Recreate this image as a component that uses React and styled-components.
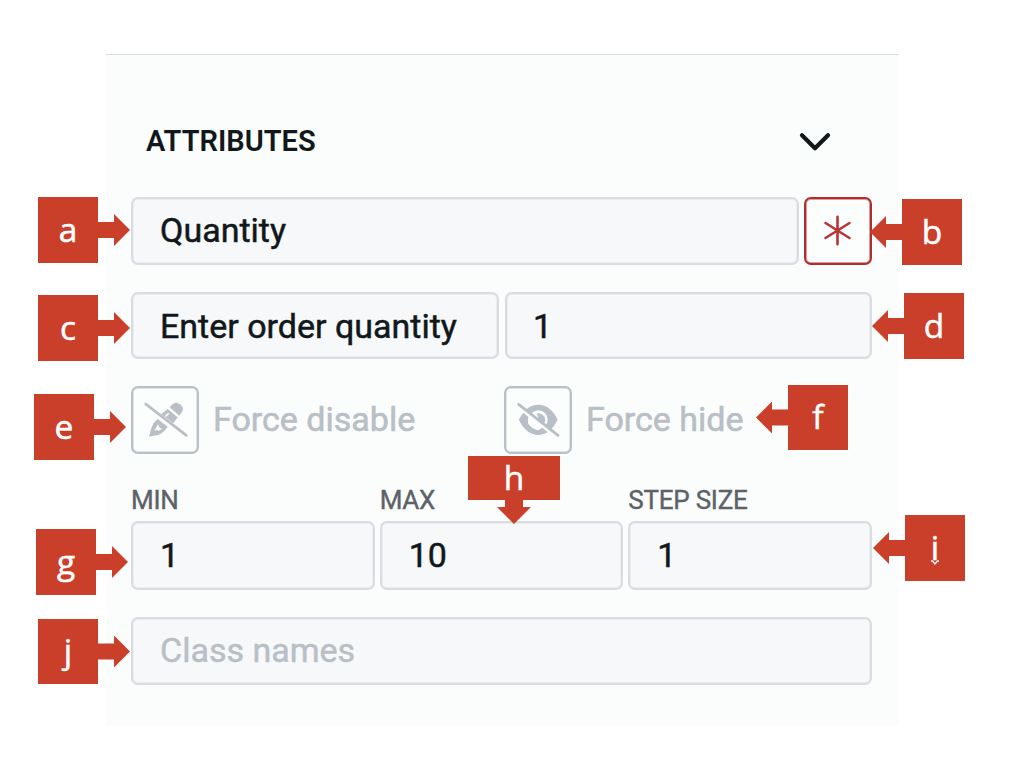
import React from "react";
import styled, { createGlobalStyle } from "styled-components";

const GlobalStyle = createGlobalStyle`
  * { box-sizing: border-box; }
  body { margin: 0; background: #fff; }
`;

const Page = styled.main`
  position: relative;
  width: 1020px;
  height: 772px;
  overflow: hidden;
  padding: 54px 0 0 106px;
  background: #fff;
  font-family: Roboto, sans-serif;
`;

const Panel = styled.section`
  width: 793px;
  height: 672px;
  padding: 61px 27px 0 25px;
  background: #fbfdfc;
  border-top: 1px solid #d8dbdf;
`;

const Header = styled.header`
  display: flex;
  align-items: center;
  justify-content: space-between;
  height: 52px;
  margin-bottom: 29px;
  padding: 0 41px 0 15px;
`;

const Title = styled.h2`
  margin: 0;
  padding-bottom: 2px;
  font-size: 29px;
  font-weight: 600;
  line-height: 50px;
  color: #11181b;
`;

const Row = styled.div`
  display: grid;
  grid-template-columns: ${(p) => p.$columns};
  column-gap: ${(p) => p.$gap || "6px"};
  height: ${(p) => p.$height || "68px"};
  margin-bottom: ${(p) => p.$after || "0"};
`;

const Field = styled.div`
  display: flex;
  align-items: center;
  min-width: 0;
  padding: 0 0 ${(p) => (p.$low ? "0" : "2px")} ${(p) => p.$inset || "27px"};
  border: 2px solid #d9dce1;
  border-radius: 7px;
  box-shadow: inset 0 0 0 1px #ebedf0;
  background: #f7f8fa;
  font-size: 34px;
  color: ${(p) => (p.$placeholder ? "#b8bfc6" : "#11181b")};
  -webkit-text-stroke: 0.5px currentColor;
  white-space: nowrap;
`;

const IconButton = styled.button`
  display: flex;
  align-items: center;
  justify-content: center;
  width: 68px;
  height: 68px;
  padding: 0;
  border: 2px solid ${(p) => (p.$required ? "#b12c2d" : "#b9bfc7")};
  border-radius: 7px;
  box-shadow: inset 0 0 0 1px ${(p) => (p.$required ? "#dc9c9c" : "#e0e4e8")};
  background: #fcfefd;
`;

const Toggle = styled.div`
  display: flex;
  align-items: center;
  gap: 14px;
`;

const ToggleLabel = styled.span`
  padding-bottom: 2px;
  font-size: 34px;
  color: #b8bfc6;
  -webkit-text-stroke: 0.6px currentColor;
  white-space: nowrap;
`;

const Label = styled.span`
  font-size: 26px;
  line-height: 36px;
  letter-spacing: -0.25px;
  color: #5b6268;
  -webkit-text-stroke: 0.4px currentColor;
`;

const Callout = styled.div`
  position: absolute;
  left: ${(p) => p.$x}px;
  top: ${(p) => p.$y}px;
  display: flex;
  align-items: center;
  justify-content: center;
  width: ${(p) => p.$w || 60}px;
  height: ${(p) => p.$h || 66}px;
  padding-bottom: ${(p) => p.$lift || 1}px;
  background: #ca3f2a;
  color: #fff;
  font-family: "Open Sans", sans-serif;
  font-size: 33.5px;
  line-height: 1;
  -webkit-text-stroke: 0.5px #fff;
`;

const arrows = {
  right: `left: 100%; top: calc(50% - 16px); width: 32px; height: 32px;
    clip-path: polygon(0 8px, 16px 8px, 16px 0, 32px 16px, 16px 32px, 16px 24px, 0 24px);`,
  left: `right: 100%; top: calc(50% - 16px); width: 32px; height: 32px;
    clip-path: polygon(32px 8px, 16px 8px, 16px 0, 0 16px, 16px 32px, 16px 24px, 32px 24px);`,
  down: `top: 100%; left: calc(50% - 17px); width: 34px; height: 24px;
    clip-path: polygon(8px 0, 26px 0, 26px 7px, 34px 7px, 17px 24px, 0 7px, 8px 7px);`,
};

const Arrow = styled.i`
  position: absolute;
  ${(p) => arrows[p.$dir]}
  background: #ca3f2a;
`;

const Squiggle = styled.svg`
  position: absolute;
  left: 26px;
  top: 45px;
`;

const ChevronIcon = () => (
  <svg width="32" height="20" viewBox="0 0 32 20" fill="none">
    <path d="M3 3.3 16 16.3 29 3.3" stroke="#11181b" strokeWidth="4.2" strokeLinecap="round" strokeLinejoin="round" />
  </svg>
);

const AsteriskIcon = () => (
  <svg width="32" height="32" viewBox="0 0 32 32" fill="none">
    <path d="M15.5 1.8V29.2M3.5 8 27.5 23M27.5 8 3.5 23" stroke="#b83435" strokeWidth="2.6" strokeLinecap="round" />
  </svg>
);

const PencilOffIcon = () => (
  <svg width="48" height="48" viewBox="48 48 144 144" fill="none">
    <path d="M134 82 143 73Q153 64 165 73 178 84 172 94L163 107Z" fill="#b9bfc7" />
    <path d="M128 87 158 112 145 130 109 102Z" fill="#b9bfc7" />
    <path d="M122 109 131 100" stroke="#fcfefd" strokeWidth="5" />
    <path d="M98 117Q84 128 80 141L72 170 101 164Q116 158 128 140Z" fill="#b9bfc7" />
    <path d="M99 133 88 153 96 149 101 153 111 146 104 143Z" fill="#fcfefd" />
    <path d="M62 72 184 166" stroke="#b9bfc7" strokeWidth="8.5" strokeLinecap="round" />
  </svg>
);

const EyeOffIcon = () => (
  <svg width="48" height="48" viewBox="42 48 144 144" fill="none">
    <path d="M57 119Q79 74 115 74 151 74 173 119 151 164 115 164 79 164 57 119Z" fill="#b9bfc7" />
    <circle cx="115" cy="119" r="28" fill="#fcfefd" />
    <path d="M115 100A20 20 0 1 1 97 127Q104 131 111 124 119 112 109 101Z" fill="#b9bfc7" />
    <path d="M99 118 78 101Q76 140 114 152L127 141Z" fill="#fcfefd" />
    <path d="M72 97 57 119Q79 164 115 164 130 164 142 157L132 148 120 152Q92 150 84 130 82 116 86 109Z" fill="#b9bfc7" />
    <path d="M53 80 171 173" stroke="#fcfefd" strokeWidth="8" />
    <path d="M56 73 174 166" stroke="#b9bfc7" strokeWidth="8.5" strokeLinecap="round" />
  </svg>
);

const callouts = [
  { t: "a", x: 38, y: 197, dir: "right" },
  { t: "b", x: 902, y: 199, dir: "left" },
  { t: "c", x: 38, y: 295, dir: "right" },
  { t: "d", x: 904, y: 293, dir: "left" },
  { t: "e", x: 34, y: 394, dir: "right" },
  { t: "f", x: 788, y: 385, h: 65, dir: "left" },
  { t: "g", x: 36, y: 529, dir: "right" },
  { t: "h", x: 468, y: 456, w: 92, h: 44, dir: "down" },
  { t: "i", x: 905, y: 515, dir: "left" },
  { t: "j", x: 38, y: 619, h: 65, dir: "right" },
];

export default function App() {
  return (
    <Page>
      <GlobalStyle />
      <Panel>
        <Header>
          <Title>ATTRIBUTES</Title>
          <ChevronIcon />
        </Header>
        <Row $columns="668px 68px" $gap="5px" $after="27px">
          <Field>Quantity</Field>
          <IconButton $required aria-label="Required">
            <AsteriskIcon />
          </IconButton>
        </Row>
        <Row $columns="368px 1fr" $height="67px" $after="27px">
          <Field $low>Enter order quantity</Field>
          <Field $low $inset="26px">1</Field>
        </Row>
        <Row $columns="367px 1fr" $after="28px">
          <Toggle>
            <IconButton aria-label="Force disable">
              <PencilOffIcon />
            </IconButton>
            <ToggleLabel>Force disable</ToggleLabel>
          </Toggle>
          <Toggle>
            <IconButton aria-label="Force hide">
              <EyeOffIcon />
            </IconButton>
            <ToggleLabel>Force hide</ToggleLabel>
          </Toggle>
        </Row>
        <Row $columns="repeat(3, 1fr)" $gap="5px" $height="36px" $after="3px">
          <Label>MIN</Label>
          <Label>MAX</Label>
          <Label>STEP SIZE</Label>
        </Row>
        <Row $columns="repeat(3, 1fr)" $gap="5px" $height="69px" $after="27px">
          <Field>1</Field>
          <Field>10</Field>
          <Field>1</Field>
        </Row>
        <Row $columns="1fr">
          <Field $placeholder>Class names</Field>
        </Row>
      </Panel>
      {callouts.map((c) => (
        <Callout key={c.t} $x={c.x} $y={c.y} $w={c.w} $h={c.h}>
          {c.t}
          <Arrow $dir={c.dir} />
          {c.t === "i" && (
            <Squiggle width="8" height="6" viewBox="0 0 8 6" fill="none">
              <path d="M0 1H1.5L4 4 6.5 1H8" stroke="#fff" strokeWidth="1.3" />
            </Squiggle>
          )}
        </Callout>
      ))}
    </Page>
  );
}
